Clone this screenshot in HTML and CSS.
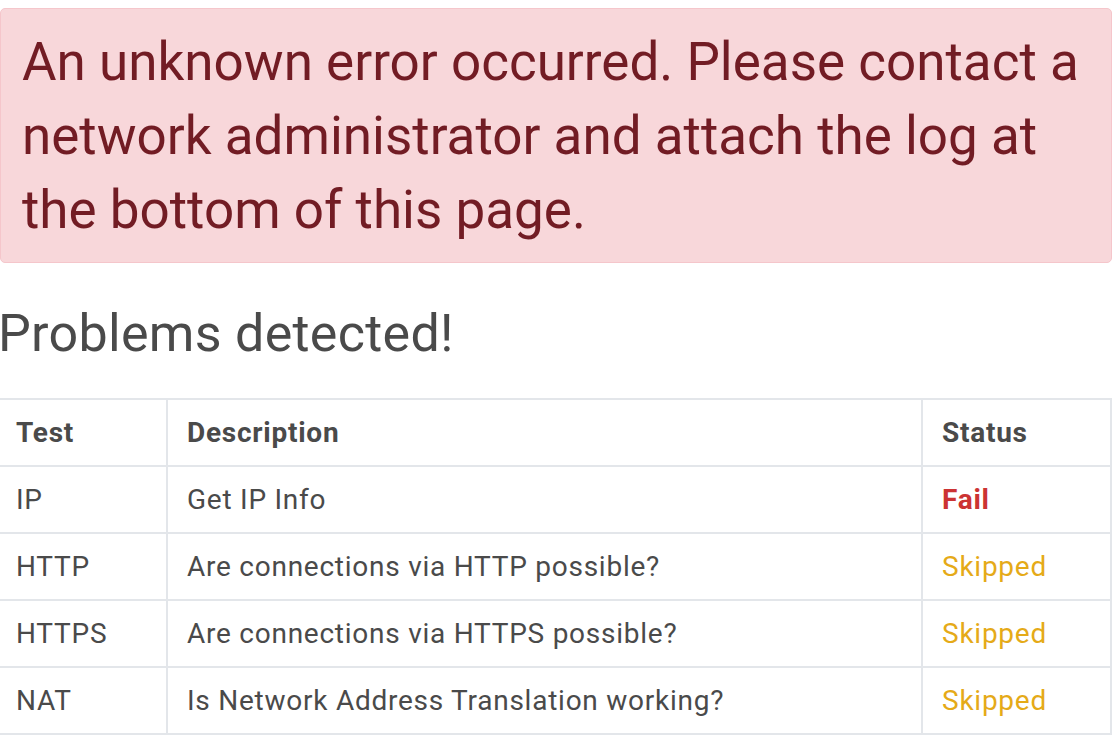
FILE: index.html
```html
<!DOCTYPE html>
<html>
<head>
<meta charset="utf-8">
<link rel="stylesheet" href="styles.css">
</head>
<body>
<div class="page">
  <div class="alert">An unknown error occurred. Please contact a network administrator and attach the log at the bottom of this page.</div>
  <h1 class="title">Problems detected!</h1>
  <table class="results">
    <thead>
      <tr><th class="c-test">Test</th><th class="c-desc">Description</th><th class="c-status">Status</th></tr>
    </thead>
    <tbody>
      <tr><td>IP</td><td>Get IP Info</td><td class="fail">Fail</td></tr>
      <tr><td>HTTP</td><td>Are connections via HTTP possible?</td><td class="skipped">Skipped</td></tr>
      <tr><td>HTTPS</td><td>Are connections via HTTPS possible?</td><td class="skipped">Skipped</td></tr>
      <tr><td>NAT</td><td>Is Network Address Translation working?</td><td class="skipped">Skipped</td></tr>
    </tbody>
  </table>
</div>
</body>
</html>
```
FILE: styles.css
```css
html, body {
  margin: 0;
  padding: 0;
  background: #ffffff;
}
body {
  font-family: Roboto, "Liberation Sans", sans-serif;
  color: #4a4a4a;
}
.page {
  width: 1112px;
  padding-top: 8px;
}
.alert {
  background: #f8d7da;
  border: 1px solid #f5c6cb;
  border-radius: 5px;
  color: #721c24;
  font-size: 53px;
  line-height: 74px;
  padding: 16px 20px 15px 21px;
}
.title {
  margin: 34px 0 0 -2px;
  font-size: 52px;
  font-weight: 400;
  letter-spacing: 0.3px;
  line-height: 74px;
  color: #4a4a4a;
}
.results {
  margin-top: 27px;
  width: 1112px;
  table-layout: fixed;
  border-collapse: collapse;
  font-size: 28px;
  letter-spacing: 0.75px;
  line-height: 39px;
}
.results th, .results td {
  box-sizing: border-box;
  border: 2px solid #e3e6ea;
  padding: 13px 12px 13px 19px;
  text-align: left;
  vertical-align: top;
  white-space: nowrap;
}
.results tr > :first-child {
  border-left: none;
  padding-left: 16px;
}
.results th { font-weight: 700; }
.c-test { width: 167px; }
.c-status { width: 189px; }
.fail { color: #cc3333; font-weight: 700; }
.skipped { color: #e5aa18; }
```
